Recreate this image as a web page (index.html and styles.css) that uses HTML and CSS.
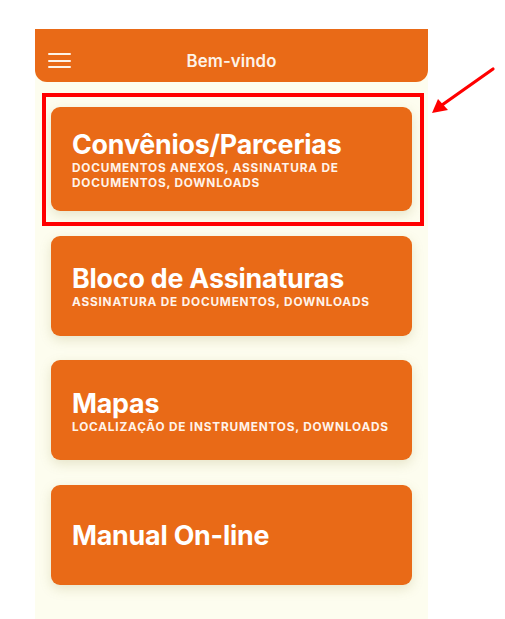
FILE: index.html
```html
<!DOCTYPE html>
<html lang="pt">
<head>
<meta charset="utf-8">
<title>Bem-vindo</title>
<link rel="stylesheet" href="styles.css">
</head>
<body>
<div class="stage">
  <div class="phone">
    <header class="topbar">
      <span class="burger"><i></i><i></i><i></i></span>
      <h1 class="topbar-title">Bem-vindo</h1>
    </header>
    <main class="menu">
      <a class="card card-first">
        <span class="card-title">Convênios/Parcerias</span>
        <span class="card-sub">DOCUMENTOS ANEXOS, ASSINATURA DE DOCUMENTOS, DOWNLOADS</span>
      </a>
      <a class="card">
        <span class="card-title">Bloco de Assinaturas</span>
        <span class="card-sub">ASSINATURA DE DOCUMENTOS, DOWNLOADS</span>
      </a>
      <a class="card">
        <span class="card-title">Mapas</span>
        <span class="card-sub">LOCALIZAÇÃO DE INSTRUMENTOS, DOWNLOADS</span>
      </a>
      <a class="card">
        <span class="card-title">Manual On-line</span>
      </a>
    </main>
  </div>
  <div class="highlight"></div>
  <svg class="arrow" width="80" height="60" viewBox="0 0 80 60">
    <line x1="73" y1="14" x2="22" y2="50" stroke="#ff0000" stroke-width="3.2" stroke-linecap="round"/>
    <polygon points="12,58 18,44 28,55" fill="#ff0000"/>
  </svg>
</div>
</body>
</html>
```
FILE: styles.css
```css
* { box-sizing: border-box; }
html, body {
  margin: 0;
  padding: 0;
  background: #ffffff;
  font-family: Inter, "Noto Sans", "Liberation Sans", sans-serif;
}
.stage {
  position: relative;
  width: 505px;
  height: 619px;
  overflow: hidden;
  padding: 29px 0 0 35px;
}
.phone {
  width: 393px;
  height: 590px;
  background: #fdfdef;
  display: flex;
  flex-direction: column;
}
.topbar {
  height: 53px;
  background: #e96a17;
  border-radius: 0 0 12px 12px;
  display: flex;
  align-items: center;
  justify-content: center;
  position: relative;
  flex-shrink: 0;
}
.burger {
  position: absolute;
  left: 13px;
  top: 24px;
  width: 23px;
  display: flex;
  flex-direction: column;
  gap: 4.5px;
}
.burger i {
  display: block;
  height: 2px;
  background: #fdf3e8;
  border-radius: 1px;
}
.topbar-title {
  margin: 0;
  color: #fdf3e8;
  font-size: 16.8px;
  font-weight: 600;
  letter-spacing: 0.1px;
  padding-top: 10px;
}
.menu {
  padding: 25px 16px 0 16px;
  display: flex;
  flex-direction: column;
  gap: 24.5px;
}
.card {
  display: flex;
  flex-direction: column;
  justify-content: center;
  min-height: 100px;
  background: #e96a17;
  border-radius: 9px;
  padding: 19px 16px 18px 21px;
  color: #ffffff;
  box-shadow: 0 4px 12px rgba(150, 140, 70, 0.22);
}
.card-first { min-height: 104px; }
.card-title {
  font-size: 26.8px;
  font-weight: 700;
  line-height: 32px;
  letter-spacing: -0.2px;
}
.card-sub {
  font-size: 11.8px;
  font-weight: 700;
  line-height: 15px;
  letter-spacing: 0.8px;
  color: #fff3ea;
  margin-top: 1px;
}
.highlight {
  position: absolute;
  left: 42px;
  top: 93px;
  width: 382px;
  height: 133px;
  border: 4px solid #ff0000;
}
.arrow {
  position: absolute;
  left: 420px;
  top: 55px;
}
```
